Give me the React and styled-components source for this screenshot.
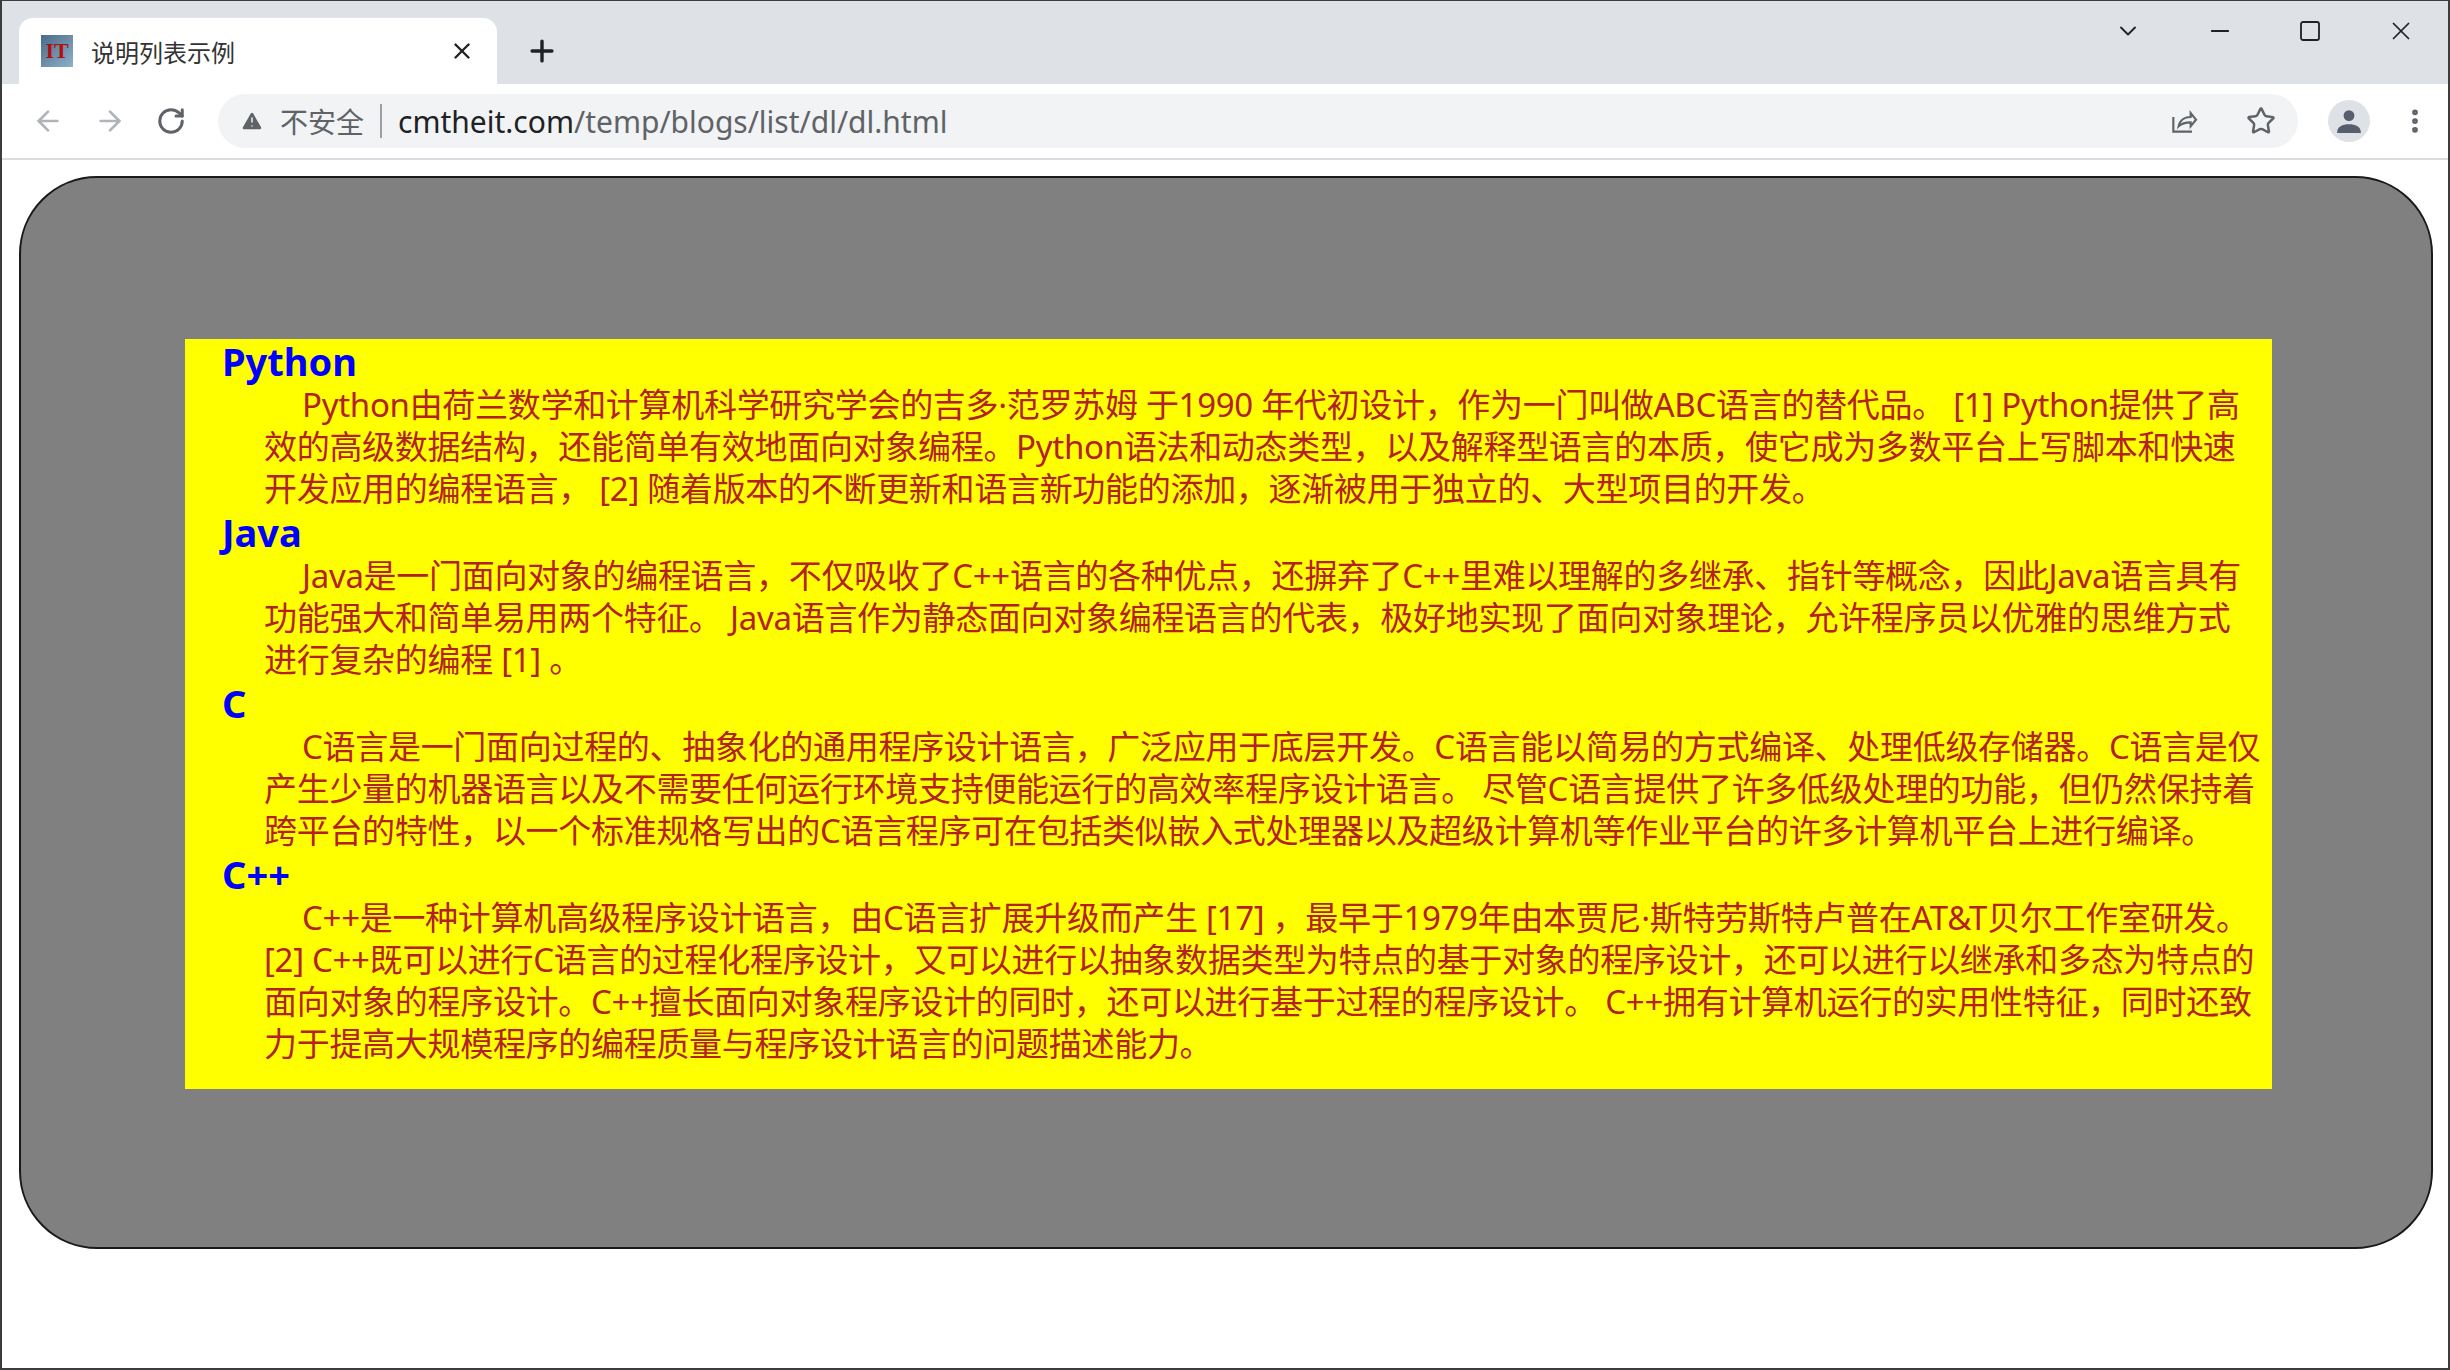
import React from 'react';
import styled, { createGlobalStyle } from 'styled-components';
import {
  ArrowLeft, ArrowRight, RotateCw, TriangleAlert, Star, MoreVertical,
  ChevronDown, Minus, Square, X, Plus,
} from 'lucide-react';

const Global = createGlobalStyle`
  html, body { margin: 0; padding: 0; background: #fff; }
  body { font-family: "Noto Sans", "Noto Sans CJK SC", sans-serif; }
`;

const Window = styled.div`
  width: 2450px;
  height: 1370px;
  box-sizing: border-box;
  border: 2px solid #3c3c3c;
  border-top-width: 1px;
  display: flex;
  flex-direction: column;
  overflow: hidden;
`;

const TabStrip = styled.div`
  height: 83px;
  background: #dee1e6;
  display: flex;
  align-items: flex-end;
  padding-left: 17px;
`;

const Tab = styled.div`
  width: 478px;
  height: 66px;
  background: #fff;
  border-radius: 14px 14px 0 0;
  display: flex;
  align-items: center;
  padding: 0 22px;
  box-sizing: border-box;
  gap: 18px;
`;

const Favicon = styled.div`
  width: 32px;
  height: 32px;
  background: linear-gradient(135deg, #4a6a8a, #8fb0c8);
  color: #b01010;
  font: bold 22px "Liberation Serif", serif;
  display: flex;
  align-items: center;
  justify-content: center;
`;

const TabTitle = styled.span`
  flex: 1;
  font-size: 24px;
  color: #333;
  font-family: "Noto Sans CJK SC", sans-serif;
`;

const NewTab = styled.div`
  height: 66px;
  display: flex;
  align-items: center;
  padding-left: 28px;
  flex: 1;
`;

const WinControls = styled.div`
  align-self: flex-start;
  height: 60px;
  display: flex;
  align-items: center;
  gap: 64px;
  padding-right: 32px;
`;

const Toolbar = styled.div`
  height: 74px;
  background: #fff;
  border-bottom: 2px solid #dadce0;
  display: flex;
  align-items: center;
  padding: 0 18px 0 30px;
  gap: 30px;
`;

const NavIcon = styled.div`
  color: ${p => (p.$dim ? '#b0b3b8' : '#5f6368')};
  display: flex;
`;

const Omnibox = styled.div`
  flex: 1;
  height: 54px;
  background: #f1f3f4;
  border-radius: 27px;
  display: flex;
  align-items: center;
  padding: 0 22px;
  gap: 16px;
  margin-left: 2px;
`;

const Insecure = styled.span`
  font-size: 28px;
  color: #5f6368;
  font-family: "Noto Sans CJK SC", sans-serif;
  padding-right: 16px;
  border-right: 2px solid #9aa0a6;
  line-height: 34px;
`;

const Url = styled.span`
  flex: 1;
  font-size: 30px;
  color: #5f6368;
  b { font-weight: normal; color: #202124; }
`;

const Avatar = styled.div`
  width: 42px;
  height: 42px;
  border-radius: 50%;
  background: #dee1e6;
  display: flex;
  align-items: center;
  justify-content: center;
`;

const Page = styled.div`
  flex: 1;
  padding: 16px 15px 0 17px;
`;

const Frame = styled.div`
  height: 1073px;
  box-sizing: border-box;
  background: #808080;
  border: 2px solid #1a1a1a;
  border-radius: 78px;
  padding: 161px 0 0 164px;
`;

const List = styled.dl`
  margin: 0;
  width: 2087px;
  height: 750px;
  box-sizing: border-box;
  background: #ffff00;
  padding: 0 9px 0 37px;
  font-family: "Noto Sans", "Noto Sans CJK SC", sans-serif;
`;

const Term = styled.dt`
  color: #0000ff;
  font-weight: bold;
  font-size: 38px;
  line-height: 45px;
`;

const Desc = styled.dd`
  margin: 0 0 0 42px;
  color: #b22222;
  font-size: 33px;
  line-height: 42px;
  text-indent: 38px;
  letter-spacing: -0.3px;
`;

const items = [
  ['Python', 'Python由荷兰数学和计算机科学研究学会的吉多·范罗苏姆 于1990 年代初设计，作为一门叫做ABC语言的替代品。 [1] Python提供了高效的高级数据结构，还能简单有效地面向对象编程。Python语法和动态类型，以及解释型语言的本质，使它成为多数平台上写脚本和快速开发应用的编程语言， [2] 随着版本的不断更新和语言新功能的添加，逐渐被用于独立的、大型项目的开发。'],
  ['Java', 'Java是一门面向对象的编程语言，不仅吸收了C++语言的各种优点，还摒弃了C++里难以理解的多继承、指针等概念，因此Java语言具有功能强大和简单易用两个特征。 Java语言作为静态面向对象编程语言的代表，极好地实现了面向对象理论，允许程序员以优雅的思维方式进行复杂的编程 [1] 。'],
  ['C', 'C语言是一门面向过程的、抽象化的通用程序设计语言，广泛应用于底层开发。C语言能以简易的方式编译、处理低级存储器。C语言是仅产生少量的机器语言以及不需要任何运行环境支持便能运行的高效率程序设计语言。 尽管C语言提供了许多低级处理的功能，但仍然保持着跨平台的特性，以一个标准规格写出的C语言程序可在包括类似嵌入式处理器以及超级计算机等作业平台的许多计算机平台上进行编译。'],
  ['C++', 'C++是一种计算机高级程序设计语言，由C语言扩展升级而产生 [17] ，最早于1979年由本贾尼·斯特劳斯特卢普在AT&T贝尔工作室研发。 [2] C++既可以进行C语言的过程化程序设计，又可以进行以抽象数据类型为特点的基于对象的程序设计，还可以进行以继承和多态为特点的面向对象的程序设计。C++擅长面向对象程序设计的同时，还可以进行基于过程的程序设计。 C++拥有计算机运行的实用性特征，同时还致力于提高大规模程序的编程质量与程序设计语言的问题描述能力。'],
];

export default function App() {
  return (
    <>
      <Global />
      <Window>
        <TabStrip>
          <Tab>
            <Favicon>IT</Favicon>
            <TabTitle>说明列表示例</TabTitle>
            <X size={26} color="#202124" strokeWidth={2.2} />
          </Tab>
          <NewTab><Plus size={34} color="#202124" strokeWidth={2.4} /></NewTab>
          <WinControls>
            <ChevronDown size={28} color="#202124" strokeWidth={1.6} />
            <Minus size={28} color="#202124" strokeWidth={1.6} />
            <Square size={24} color="#202124" strokeWidth={1.8} />
            <X size={30} color="#202124" strokeWidth={1.4} />
          </WinControls>
        </TabStrip>
        <Toolbar>
          <NavIcon $dim><ArrowLeft size={32} strokeWidth={2} /></NavIcon>
          <NavIcon $dim><ArrowRight size={32} strokeWidth={2} /></NavIcon>
          <NavIcon><RotateCw size={30} strokeWidth={2.4} /></NavIcon>
          <Omnibox>
            <TriangleAlert size={24} color="#5f6368" fill="#5f6368" stroke="#f1f3f4" strokeWidth={1.5} />
            <Insecure>不安全</Insecure>
            <Url><b>cmtheit.com</b>/temp/blogs/list/dl/dl.html</Url>
            <NavIcon>
              <svg width="32" height="32" viewBox="0 0 24 24" fill="none" stroke="currentColor" strokeWidth="1.6">
                <path d="M4 9v11h14" />
                <path d="M8 16c1-5 5-7 9-7V6l4 5-4 5v-3c-4 0-7 1-9 3z" />
              </svg>
            </NavIcon>
            <NavIcon style={{ marginLeft: 30 }}><Star size={30} strokeWidth={2} /></NavIcon>
          </Omnibox>
          <Avatar>
            <svg width="26" height="26" viewBox="0 0 24 24" fill="#575f6f">
              <circle cx="12" cy="7" r="5" />
              <path d="M1 23c0-6 5-8 11-8s11 2 11 8z" />
            </svg>
          </Avatar>
          <NavIcon><MoreVertical size={30} strokeWidth={2.6} /></NavIcon>
        </Toolbar>
        <Page>
          <Frame>
            <List>
              {items.map(([t, d]) => (
                <React.Fragment key={t}>
                  <Term>{t}</Term>
                  <Desc>{d}</Desc>
                </React.Fragment>
              ))}
            </List>
          </Frame>
        </Page>
      </Window>
    </>
  );
}
